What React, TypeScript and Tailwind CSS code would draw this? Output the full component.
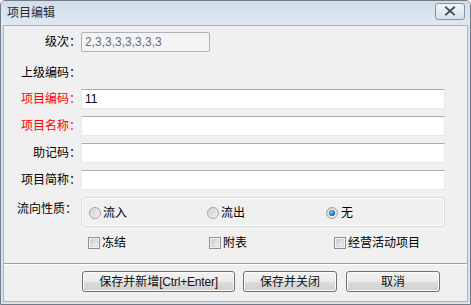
import React from "react";

const font = { fontFamily: '"Liberation Sans","Noto Sans CJK SC",sans-serif' };

function Radio({ checked }: { checked?: boolean }) {
  return (
    <svg width="12" height="12" viewBox="0 0 12 12" className="shrink-0">
      <defs>
        <linearGradient id="rg" x1="0" y1="0" x2="1" y2="1">
          <stop offset="0" stopColor="#c9c9c9" />
          <stop offset="1" stopColor="#f6f6f6" />
        </linearGradient>
        <radialGradient id="rb" cx="0.4" cy="0.35" r="0.7">
          <stop offset="0" stopColor="#8fd0ff" />
          <stop offset="0.5" stopColor="#2a8ad8" />
          <stop offset="1" stopColor="#0b4f8f" />
        </radialGradient>
      </defs>
      <circle cx="6" cy="6" r="5.5" fill="url(#rg)" stroke="#a3a3a3" />
      <circle cx="6" cy="6" r="4" fill="none" stroke="#e8e8e8" strokeWidth="0.8" />
      {checked && <circle cx="6" cy="6" r="3" fill="url(#rb)" />}
    </svg>
  );
}

function Check() {
  return (
    <span className="w-[12px] h-[12px] shrink-0 border border-[#8e8f8f] bg-[#f4f4f4] flex items-center justify-center">
      <span className="w-[8px] h-[8px] bg-[linear-gradient(135deg,#cbcbcb,#f3f3f3)] border border-[#d6d6d6]" />
    </span>
  );
}

function Btn({ w, children }: { w: string; children: React.ReactNode }) {
  return (
    <div
      className={`${w} h-[21px] rounded-[3px] border border-[#707070] bg-[linear-gradient(#f2f2f2_0%,#ebebeb_50%,#dddddd_51%,#cfcfcf_100%)] flex items-center justify-center text-[12px] text-[#111] shadow-[inset_0_0_0_1px_#fcfcfc]`}
    >
      {children}
    </div>
  );
}

function Field({ label, red, value, w }: { label: string; red?: boolean; value?: string; w?: string }) {
  return (
    <div className="flex items-center h-[20px]">
      <div className={`w-[78px] text-right text-[12px] leading-[20px] ${red ? "text-[#ff0000]" : "text-[#000]"}`}>{label}</div>
      <div
        className={`${w ?? "w-[364px]"} h-[20px] bg-white border border-[#e3e9ef] border-t-[#abadb3] text-[12px] leading-[18px] pl-[3px] text-[#000]`}
      >
        {value}
      </div>
    </div>
  );
}

export default function App() {
  return (
    <div style={font} className="w-[471px] h-[305px] flex flex-col border border-[#6f7c8a] rounded-t-[5px] overflow-hidden bg-[#d9e3ee]">
      <div className="h-[24px] shrink-0 flex items-center justify-between pl-[6px] pr-[5px] bg-[linear-gradient(#d3dde8,#dfe8f3)]">
        <span className="text-[12px] text-[#1e2a36]">项目编辑</span>
        <div className="w-[30px] h-[17px] mt-[-4px] rounded-[3px] border border-[#8694a6] bg-[linear-gradient(#f1f4f8,#d7e0ea)] flex items-center justify-center">
          <svg width="14" height="10" viewBox="0 0 14 10">
            <path d="M3 1.5 L11 8.5 M11 1.5 L3 8.5" stroke="#ffffff" strokeWidth="4" strokeLinecap="round" />
            <path d="M3 1.5 L11 8.5 M11 1.5 L3 8.5" stroke="#4c5460" strokeWidth="2.2" strokeLinecap="square" />
          </svg>
        </div>
      </div>
      <div className="flex-1 mx-[2px] mb-[2px] bg-[#f0f0f0] border border-[#a9b4c0] flex flex-col">
        <div className="mt-[6px]">
          <div className="flex items-center h-[20px]">
            <div className="w-[77px] text-right text-[12px] leading-[20px] text-[#000]">级次：</div>
            <div className="w-[129px] h-[20px] bg-[#f4f4f4] border border-[#adb2b5] rounded-[2px] text-[12px] leading-[18px] pl-[3px] text-[#6d6d6d]">
              2,3,3,3,3,3,3,3
            </div>
          </div>
        </div>
        <div className="mt-[11px] h-[20px] flex items-center">
          <div className="w-[77px] text-right text-[12px] text-[#000]">上级编码：</div>
        </div>
        <div className="mt-[6px] flex flex-col gap-[7px] -ml-px">
          <Field label="项目编码：" red value="11" />
          <Field label="项目名称：" red />
          <Field label="助记码：" />
          <Field label="项目简称：" />
        </div>
        <div className="mt-[7px] flex">
          <div className="w-[77px] pr-[4px] text-right text-[12px] text-[#000] pt-[3px]">流向性质：</div>
          <div className="w-[364px] h-[30px] border border-[#dcdcdc] rounded-[3px] flex items-center pl-[7px] pt-[2px] shadow-[inset_0_0_0_1px_#fafafa]">
            <div className="w-[118px] flex items-center gap-[2px] text-[12px]">
              <Radio />
              <span>流入</span>
            </div>
            <div className="w-[119px] flex items-center gap-[2px] text-[12px]">
              <Radio />
              <span>流出</span>
            </div>
            <div className="flex items-center gap-[3px] text-[12px]">
              <Radio checked />
              <span>无</span>
            </div>
          </div>
        </div>
        <div className="mt-[10px] h-[12px] flex items-center pl-[84px] text-[12px]">
          <div className="w-[121px] flex items-center gap-[2px]">
            <Check />
            <span>冻结</span>
          </div>
          <div className="w-[125px] flex items-center gap-[2px]">
            <Check />
            <span>附表</span>
          </div>
          <div className="flex items-center gap-[2px]">
            <Check />
            <span>经营活动项目</span>
          </div>
        </div>
        <div className="mt-[14px] h-[2px] border-t border-[#a0a0a0] border-b border-b-[#ffffff]" />
        <div className="mt-[6px] flex pl-[78px]">
          <Btn w="w-[153px]">
            保存并新增<span className="tracking-[-0.2px]">[Ctrl+Enter]</span>
          </Btn>
          <div className="w-[8px]" />
          <Btn w="w-[94px]">保存并关闭</Btn>
          <div className="w-[9px]" />
          <Btn w="w-[94px]">取消</Btn>
        </div>
      </div>
    </div>
  );
}
